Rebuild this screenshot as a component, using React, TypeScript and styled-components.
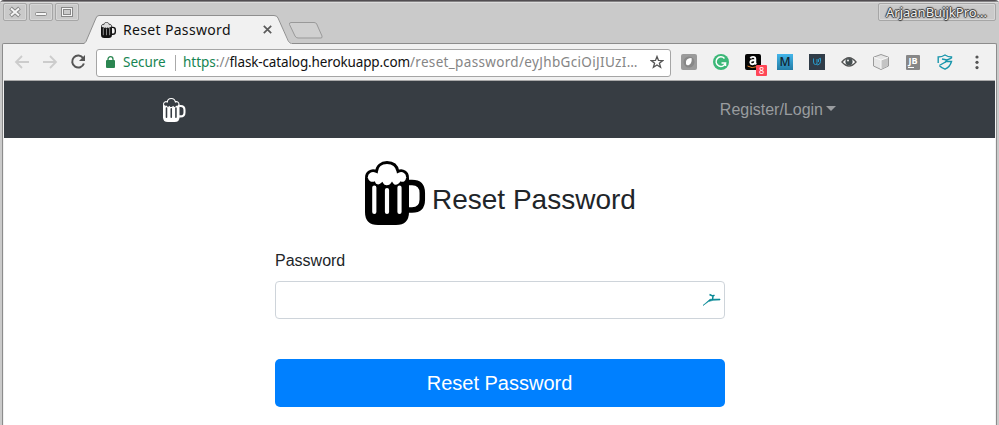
import React from "react";
import styled, { createGlobalStyle } from "styled-components";

const Global = createGlobalStyle`
  * { box-sizing: border-box; }
  body { margin: 0; background: #fff; font-family: "Liberation Sans", Arial, sans-serif; overflow: hidden; }
`;

const Window = styled.div`
  width: 999px;
  height: 425px;
  display: flex;
  flex-direction: column;
  background: #cacaca;
  border-top: 1px solid #514d51;
  border-radius: 4px 4px 0 0;
  overflow: hidden;
`;
const TitleBar = styled.div`
  height: 42px;
  flex: none;
  display: flex;
  align-items: flex-start;
  padding-left: 3px;
  border-top: 1px solid #858385;
  box-shadow: inset 0 1px #dcdcdc;
`;
const WindowButtons = styled.div`
  display: flex;
  gap: 2px;
  margin-top: 1px;
`;
const WindowButton = styled.div`
  width: 24px;
  height: 18px;
  border: 1px solid #a6a6a6;
  border-radius: 2px;
  box-shadow: inset 0 0 0 1px #d6d6d6;
  svg { display: block; }
`;
const Tab = styled.div`
  width: 208px;
  height: 28px;
  margin: 13px 0 0 5px;
  position: relative;
  display: flex;
  align-items: center;
  padding: 1px 0 0 17px;
`;
const TabShape = styled.svg`
  position: absolute;
  left: 0;
  top: 0;
`;
const TabContent = styled.div`
  position: relative;
  flex: 1;
  display: flex;
  align-items: center;
`;
const ChromeText = styled.span<{ $size: number; $track: number; $color?: string }>`
  font-family: "Noto Sans", sans-serif;
  font-size: ${(p) => p.$size}px;
  line-height: 20px;
  letter-spacing: ${(p) => p.$track}px;
  color: ${(p) => p.$color ?? "#111"};
  white-space: pre;
`;
const TabTitle = styled(ChromeText)`
  width: 140px;
  margin-left: 6px;
`;
const NewTab = styled.svg`
  margin: 19px 0 0 -4px;
`;
const UserLabel = styled.div`
  width: 118px;
  height: 18px;
  margin: 1px 3px 0 auto;
  border: 1px solid #a6a6a6;
  border-radius: 2px;
  box-shadow: inset 0 0 0 1px #d6d6d6;
  font: 13px/17px "Noto Sans", sans-serif;
  letter-spacing: 0;
  padding-left: 7px;
  color: #eee;
  white-space: nowrap;
  text-shadow: 1px 0 1px #333, -1px 0 1px #333, 0 1px 1px #333, 0 -1px 1px #333;
`;
const Frame = styled.div`
  flex: 1;
  margin: 0 2px 0 2px;
  border: 1px solid #8c8c8c;
  border-bottom: 0;
  background: #f1f1f1;
  border-radius: 2px 2px 0 0;
  display: flex;
  flex-direction: column;
`;
const Toolbar = styled.div`
  height: 36px;
  flex: none;
  display: flex;
  align-items: center;
  padding-left: 11px;
`;
const NavIcons = styled.div`
  display: flex;
  gap: 12px;
  svg { display: block; }
`;
const AddressBar = styled.div`
  width: 575px;
  height: 28px;
  margin: 1px 0 0 10px;
  background: #fff;
  border: 1px solid #a5a5a5;
  border-radius: 3px;
  display: flex;
  align-items: center;
`;
const Lock = styled.svg`
  margin: -2px 0 0 9px;
`;
const Secure = styled(ChromeText)`
  width: 52px;
  margin: -2px 0 0 8px;
`;
const Url = styled.div`
  width: 458px;
  height: 20px;
  display: flex;
  margin: -2px 0 0 7px;
`;
const Divider = styled.div`
  width: 1px;
  height: 16px;
  background: #aaa;
`;
const Star = styled.svg`
  margin: -2px 0 0 9px;
`;
const Extensions = styled.div`
  display: flex;
  margin-left: 2px;
`;
const ExtensionSlot = styled.div`
  width: 32px;
  height: 28px;
  display: grid;
  place-items: center;
  position: relative;
  svg { display: block; }
`;
const Badge = styled.span`
  position: absolute;
  left: 19px;
  top: 17px;
  width: 11px;
  height: 11px;
  background: #ff4757;
  border-radius: 1px;
  color: #fff;
  font: 9px/11px "Noto Sans", sans-serif;
  text-align: center;
`;
const Tile = styled.div<{ $bg: string; $color: string; $size: number }>`
  width: 16px;
  height: 16px;
  background: ${(p) => p.$bg};
  color: ${(p) => p.$color};
  font: 600 ${(p) => p.$size}px/16px "Open Sans", sans-serif;
  text-align: center;
`;
const JetBrains = styled(Tile)`
  width: 14px;
  height: 15px;
  line-height: 11px;
  font-weight: 700;
  border-radius: 1px;
  &::after {
    content: "";
    display: block;
    width: 6px;
    height: 1px;
    margin: 1px 0 0 2px;
    background: #fff;
  }
`;
const Page = styled.div`
  flex: 1;
  width: 991px;
  margin-left: 1px;
  background: #fff;
  border-top: 1px solid #aaa;
`;
const Navbar = styled.nav`
  height: 57px;
  background: #373d43;
  display: flex;
  align-items: center;
  justify-content: space-between;
  padding: 1px 159px 0 159px;
`;
const Dropdown = styled.div`
  display: flex;
  align-items: center;
  gap: 3px;
  font-size: 16px;
  line-height: 24px;
  color: #999c9f;
`;
const Caret = styled.span`
  border: 5px solid transparent;
  border-top-color: #999c9f;
  border-bottom: 0;
  margin-top: -4px;
`;
const Heading = styled.header`
  display: flex;
  width: 272px;
  margin: 23px 0 0 361px;
  align-items: flex-start;
`;
const Title = styled.h1`
  margin: 22px 0 0 3px;
  font-size: 28px;
  line-height: 34px;
  font-weight: 400;
  color: #212529;
  white-space: nowrap;
`;
const Form = styled.div`
  width: 450px;
  margin: 24px 0 0 271px;
  display: flex;
  flex-direction: column;
`;
const Label = styled.label`
  font-size: 16px;
  line-height: 24px;
  color: #212529;
`;
const Field = styled.div`
  height: 38px;
  margin-top: 8px;
  border: 1px solid #ced4da;
  border-radius: 4px;
  display: flex;
  align-items: center;
  justify-content: flex-end;
  padding-right: 3px;
`;
const Submit = styled.button`
  height: 48px;
  margin-top: 40px;
  padding: 0 7px 0 6px;
  border: 0;
  border-radius: 5px;
  background: #0080ff;
  color: #fff;
  font: 20px/30px "Liberation Sans", Arial, sans-serif;
`;

function Mug({ size, ink, foam, slits }: { size: number; ink: string; foam: string; slits: string }) {
  return (
    <svg width={size} height={size} viewBox="0 0 64 64">
      <path d="M43 21.500H47Q57.300 21.500 57.300 32V38.500Q57.300 49 47 49H43" fill="none" stroke={ink} strokeWidth="5.500" />
      <path d="M0 17H44V51Q44 64 31 64H13Q0 64 0 51Z" fill={ink} />
      <path
        d="M11.500 10.500C12 5 16 1.500 22 1.500S32 5 33 10.500C38 8 43 12 42.500 17C42 21 39 23 36 22C33 26 29 26 27 23C25 26 19 27 17 23C14 26 10 25 9 22C5 23 2 20 1.500 17C1 12 6 8 11.500 10.500Z"
        fill={foam}
        stroke={ink}
        strokeWidth="2.800"
      />
      <path d="M9.300 26.500V51M22 29V51M34.500 26.500V51" stroke={slits} strokeWidth="4.200" strokeLinecap="round" />
    </svg>
  );
}

export default function App() {
  return (
    <>
      <Global />
      <Window>
        <TitleBar>
          <WindowButtons>
            <WindowButton>
              <svg width="22" height="16" viewBox="0 0 22 16">
                <path d="M6.500 4l9 8M15.500 4l-9 8" stroke="#888" strokeWidth="4" />
                <path d="M7 4.500l8 7M15 4.500l-8 7" stroke="#f5f5f5" strokeWidth="2" />
              </svg>
            </WindowButton>
            <WindowButton>
              <svg width="22" height="16" viewBox="0 0 22 16">
                <rect x="5.500" y="8.500" width="11" height="3" rx="1" fill="#f5f5f5" stroke="#888" />
              </svg>
            </WindowButton>
            <WindowButton>
              <svg width="22" height="16" viewBox="0 0 22 16">
                <rect x="6.500" y="4.500" width="9" height="7" fill="none" stroke="#888" strokeWidth="3" />
                <rect x="6.500" y="4.500" width="9" height="7" fill="none" stroke="#f5f5f5" />
              </svg>
            </WindowButton>
          </WindowButtons>
          <Tab>
            <TabShape width="208" height="29" viewBox="0 0 208 29">
              <path d="M0 29L2 26.500L12 3Q13 .5 15 .5H190Q193 .5 194 3L205 26.500L208 29Z" fill="#f1f1f1" />
              <path d="M0 28.500L2 26.500L12 3Q13 .5 15 .5H190Q193 .5 194 3L204.500 26.500L207 28.500" fill="none" stroke="#8f8f8f" />
            </TabShape>
            <TabContent>
              <Mug size={16} ink="#111" foam="#ddd" slits="#888" />
              <TabTitle $size={14} $track={0.33}>Reset Password</TabTitle>
              <svg width="9" height="9" viewBox="0 0 9 9">
                <path d="M.8 .8l7.400 7.400M8.200 .8L.8 8.200" stroke="#5a5a5a" strokeWidth="1.700" />
              </svg>
            </TabContent>
          </Tab>
          <NewTab width="36" height="18" viewBox="0 0 36 18">
            <path d="M3 1.500H26Q28 1.500 28.700 3L34 15Q34.500 17 33 17H10Q8 17 7 15L1.500 3.500Q1 1.500 3 1.500Z" fill="#d0d0d0" stroke="#999" />
          </NewTab>
          <UserLabel>ArjaanBuijkPro...</UserLabel>
        </TitleBar>
        <Frame>
          <Toolbar>
            <NavIcons>
              <svg width="16" height="16" viewBox="0 0 16 16">
                <path d="M15 8H2M8 2L2 8l6 6" fill="none" stroke="#ccc" strokeWidth="1.800" />
              </svg>
              <svg width="16" height="16" viewBox="0 0 16 16">
                <path d="M1 8H14M8 2l6 6-6 6" fill="none" stroke="#ccc" strokeWidth="1.800" />
              </svg>
              <svg width="16" height="16" viewBox="0 0 16 16">
                <path d="M13.200 4.200A6 6 0 1 0 13.900 9.500" fill="none" stroke="#555" strokeWidth="2" />
                <path d="M15 1V7H9Z" fill="#555" />
              </svg>
            </NavIcons>
            <AddressBar>
              <Lock width="9" height="12" viewBox="0 0 9 12">
                <rect y="4" width="9" height="8" rx="1" fill="#2b8651" />
                <path d="M2 5V3.200a2.500 2.500 0 0 1 5 0V5" fill="none" stroke="#2b8651" strokeWidth="1.300" />
              </Lock>
              <Secure $size={13.5} $track={-0.02} $color="#168552">Secure</Secure>
              <Divider />
              <Url>
                <ChromeText $size={13.5} $track={-0.02} $color="#168552">https</ChromeText>
                <ChromeText $size={13.5} $track={0.05} $color="#858585">://</ChromeText>
                <ChromeText $size={13.5} $track={-0.13}>flask-catalog.herokuapp.com</ChromeText>
                <ChromeText $size={13.5} $track={0.33} $color="#858585">/reset_password/eyJhbGciOiJIUzI…</ChromeText>
              </Url>
              <Star width="14" height="14" viewBox="0 0 14 14">
                <path d="M7 1.500l1.500 3.900 4.200.2-3.300 2.600 1.200 4.100L7 10l-3.600 2.300 1.200-4.100L1.300 5.600l4.200-.2Z" fill="none" stroke="#555" strokeWidth="1.300" />
              </Star>
            </AddressBar>
            <Extensions>
              <ExtensionSlot>
                <svg width="16" height="16" viewBox="0 0 16 16">
                  <rect width="16" height="16" rx="2" fill="#9b9b9b" />
                  <circle cx="8" cy="8" r="5.500" fill="#888" />
                  <path d="M5 10V7.500Q5.500 4 10.500 4Q11.500 8.500 8 11Q6 12 5 10Z" fill="#fff" />
                </svg>
              </ExtensionSlot>
              <ExtensionSlot>
                <svg width="16" height="16" viewBox="0 0 16 16">
                  <circle cx="8" cy="8" r="8" fill="#3cb878" />
                  <path d="M11.500 4.500A4.800 4.800 0 1 0 12.500 9H8.500M12.500 9v3" fill="none" stroke="#fff" strokeWidth="1.500" />
                </svg>
              </ExtensionSlot>
              <ExtensionSlot>
                <svg width="16" height="16" viewBox="0 0 16 16">
                  <rect width="16" height="16" rx="2" fill="#050505" />
                  <path d="M5.500 4.400Q6 2.900 8 2.900Q10.300 2.900 10.300 5V8.500Q10.300 9.500 11.300 10.200M10 6Q5.300 6 5.300 8.500Q5.500 10.200 7.200 10.200Q9.500 10.200 10.200 8" fill="none" stroke="#fff" strokeWidth="1.900" />
                  <path d="M2.500 12Q7 15 12 12.500" fill="none" stroke="#e8852d" />
                </svg>
                <Badge>8</Badge>
              </ExtensionSlot>
              <ExtensionSlot><Tile $bg="linear-gradient(#43b5ea,#247da6)" $color="#122833" $size={12}>M</Tile></ExtensionSlot>
              <ExtensionSlot>
                <svg width="16" height="16" viewBox="0 0 16 16">
                  <rect width="16" height="16" fill="#303c48" />
                  <path d="M4.500 4.500V8Q4.500 10.500 6.500 10.500T8 8.500V5M7.500 10.500Q8 11 9 10.800Q11.500 10 11.500 7.500V4.200L9.500 5.300V8" fill="none" stroke="#299bcb" strokeWidth="1" />
                </svg>
              </ExtensionSlot>
              <ExtensionSlot>
                <svg width="16" height="16" viewBox="0 0 16 16">
                  <path d="M1 8Q8 -.5 15 8Q8 16 1 8Z" fill="#fff" stroke="#555" strokeWidth="1.400" />
                  <circle cx="8" cy="7.700" r="3.600" fill="#475052" />
                  <circle cx="7" cy="6.500" r="1.100" fill="#ddd" />
                </svg>
              </ExtensionSlot>
              <ExtensionSlot>
                <svg width="16" height="16" viewBox="0 0 16 16">
                  <path d="M8 .5L15.500 3.200V12L8 15.500L.5 12V3.200Z" fill="#e6e6e6" stroke="#999" />
                  <path d="M8 6L15 3.500V11.700L8 15Z" fill="#c4c4c4" />
                  <path d="M1 3.500L8 6l7-2.500M8 6v9" fill="none" stroke="#f8f8f8" />
                </svg>
              </ExtensionSlot>
              <ExtensionSlot><JetBrains $bg="#878787" $color="#fff" $size={9}>JB</JetBrains></ExtensionSlot>
              <ExtensionSlot>
                <svg width="16" height="16" viewBox="0 0 16 16">
                  <path d="M1.200 9V3Q5 3 8 1Q11 3 14.500 3V4.200M2.300 11.500Q4.500 14 8 15.200Q13 13 14.500 7.500H9.500L2.300 11.500M5 5L10 6L14.500 4.200M10 6L8 8.500" fill="none" stroke="#1996ac" strokeWidth="1.400" />
                </svg>
              </ExtensionSlot>
              <ExtensionSlot>
                <svg width="4" height="16" viewBox="0 0 4 16">
                  <circle cx="2" cy="3" r="1.600" fill="#555" />
                  <circle cx="2" cy="8.300" r="1.600" fill="#555" />
                  <circle cx="2" cy="13.600" r="1.600" fill="#555" />
                </svg>
              </ExtensionSlot>
            </Extensions>
          </Toolbar>
          <Page>
            <Navbar>
              <Mug size={24} ink="#fff" foam="#373d43" slits="#373d43" />
              <Dropdown>Register/Login<Caret /></Dropdown>
            </Navbar>
            <Heading>
              <Mug size={64} ink="#000" foam="#fff" slits="#fff" />
              <Title>Reset Password</Title>
            </Heading>
            <Form>
              <Label>Password</Label>
              <Field>
                <svg width="19" height="14" viewBox="0 0 19 14">
                  <path d="M1 12.500L6 8L8 6.300L18 6V7L11 7.300L6.500 8.600Z" fill="#078895" stroke="#078895" strokeWidth=".6" />
                  <path d="M7.500 1.500L11 3.200L12.500 2M11 3L10.500 7" fill="none" stroke="#078895" strokeWidth="1.500" />
                </svg>
              </Field>
              <Submit>Reset Password</Submit>
            </Form>
          </Page>
        </Frame>
      </Window>
    </>
  );
}
